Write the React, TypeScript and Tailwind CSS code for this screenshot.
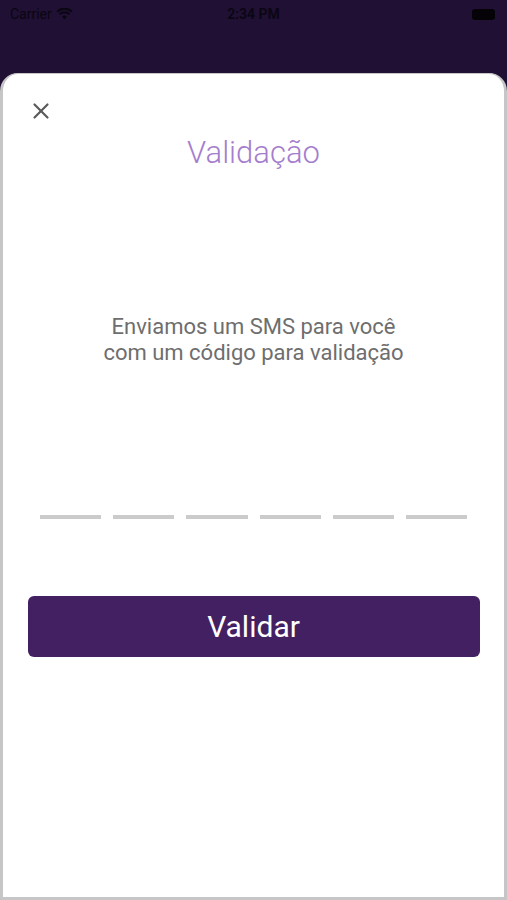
import { X } from 'lucide-react';

const DIGITS = [0, 1, 2, 3, 4, 5];

export default function App() {
  return (
    <div className="w-[507px] h-[900px] bg-[#1f1034] flex flex-col overflow-hidden" style={{ fontFamily: 'Roboto, "Liberation Sans", sans-serif' }}>
      {/* Status bar */}
      <div className="h-[28px] flex items-center justify-between px-[10px] text-[#0a0612] text-[14px]">
        <div className="flex items-center gap-1 w-[120px]">
          <span>Carrier</span>
          <svg width="17" height="12" viewBox="0 0 17 12">
            <path d="M8.5 11.5 L6 8.6 A3.6 3.6 0 0 1 11 8.6 Z" fill="#0a0612" />
            <path d="M3.6 6.2 A7 7 0 0 1 13.4 6.2" stroke="#0a0612" strokeWidth="2" fill="none" />
            <path d="M1.2 3.6 A10.5 10.5 0 0 1 15.8 3.6" stroke="#0a0612" strokeWidth="2" fill="none" />
          </svg>
        </div>
        <span className="font-semibold">2:34 PM</span>
        <div className="w-[120px] flex justify-end pr-[2px]">
          <div className="w-[23px] h-[11px] rounded-[3px] bg-[#050308]" />
        </div>
      </div>

      {/* Sheet */}
      <div className="mt-[45px] flex-1 bg-white rounded-t-[18px] border-x-[3px] border-b-[3px] border-t border-[#c6c6c6] flex flex-col items-center">
        <div className="w-full pl-[25px] pt-[24px] h-[52px]">
          <X className="w-[26px] h-[26px] text-[#5a5a5a]" strokeWidth={2} />
        </div>
        <h1 className="text-[31px] font-light text-[#a57dcd] leading-none mt-[11px]">Validação</h1>

        <p className="mt-[146px] text-[22px] leading-[26px] text-[#6e6e6e] text-center">
          Enviamos um SMS para você
          <br />
          com um código para validação
        </p>

        <div className="mt-[149px] w-full px-[37px] flex gap-[12px]">
          {DIGITS.map(i => (
            <div key={i} className="flex-1 h-[4px] bg-[#cbcbcb]" />
          ))}
        </div>

        <button className="mt-[77px] w-[452px] h-[61px] rounded-[6px] bg-[#432062] text-white text-[30px]">
          Validar
        </button>
      </div>
    </div>
  );
}
